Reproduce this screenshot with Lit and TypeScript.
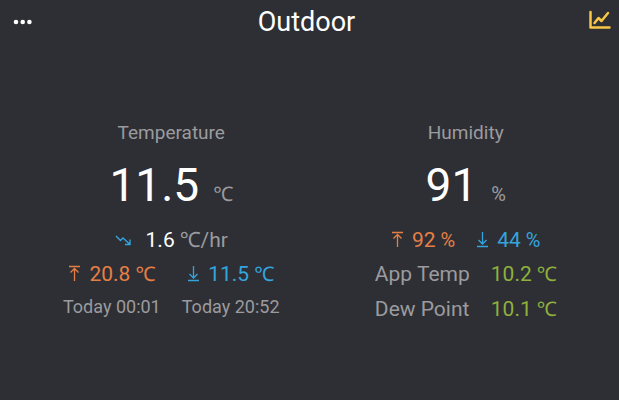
import { LitElement, html, css, svg } from "lit";
import { customElement } from "lit/decorators.js";

const highIcon = svg`<path d="M1 1.5H12M6.5 16V3.5M2.5 7.5L6.5 3.5L10.5 7.5"/>`;
const lowIcon = svg`<path d="M1 15.5H12M6.5 1V13M2.5 9L6.5 13L10.5 9"/>`;

@customElement("app-root")
export class AppRoot extends LitElement {
  static styles = css`
    :host {
      display: flex;
      flex-direction: column;
      min-height: 100vh;
      box-sizing: border-box;
      background: #2e2f34;
      color: #9b9b9f;
      font-family: Roboto, "Noto Sans", sans-serif;
      font-size: 21px;
      line-height: 34px;
      white-space: nowrap;
    }
    header {
      display: grid;
      grid-template-columns: 42px 1fr 48px;
      align-items: center;
      height: 43px;
    }
    h1 {
      margin: 0;
      text-align: center;
      font-size: 27px;
      font-weight: 400;
      color: #fff;
    }
    button {
      display: flex;
      align-items: center;
      height: 40px;
      padding: 0;
      border: 0;
      background: none;
      cursor: pointer;
    }
    .menu { padding-left: 13px; }
    .chart { justify-content: flex-end; padding: 0 8px 4px 0; }
    svg { display: block; fill: none; }
    main {
      flex: 1;
      display: grid;
      grid-template-columns: 1fr 1fr;
      align-content: center;
      padding: 2px 6px 0 24px;
    }
    section {
      display: flex;
      flex-direction: column;
      align-items: center;
    }
    h2 {
      margin: 0;
      font-size: 19px;
      font-weight: 400;
      line-height: 28px;
    }
    .value {
      display: flex;
      align-items: baseline;
      gap: 14px;
      line-height: 76px;
    }
    .number { font-size: 46px; color: #fff; }
    .unit { font-size: 20px; line-height: 20px; }
    .row { display: flex; align-items: center; }
    .trend { gap: 15px; }
    .strong { color: #fff; }
    .amount { display: flex; align-items: baseline; gap: 5px; }
    .pair { display: grid; grid-template-columns: auto auto; column-gap: 21px; justify-items: center; }
    .reading { display: flex; align-items: center; gap: 8px; }
    .high { color: #e57f46; }
    .low { color: #34a4de; }
    .derived { color: #8fb03c; }
    .time { font-size: 18px; line-height: 32px; }
    .facts {
      display: grid;
      grid-template-columns: auto auto;
      column-gap: 21px;
      margin: 0;
      line-height: 35px;
    }
    dd { margin: 0; }
  `;

  private amount(value: string, unit: string) {
    return html`<span class="amount"><span>${value}</span><span class="unit">${unit}</span></span>`;
  }

  private limit(kind: "high" | "low", value: string, unit: string) {
    return html`<span class="reading ${kind}">
      <svg width="13" height="17" viewBox="0 0 13 17" stroke="currentColor" stroke-width="1.3" aria-hidden="true">
        ${kind === "high" ? highIcon : lowIcon}
      </svg>
      ${this.amount(value, unit)}
    </span>`;
  }

  render() {
    return html`
      <header>
        <button class="menu" aria-label="More options">
          <svg width="20" height="6" viewBox="0 0 20 6">
            <g fill="#fff"><circle cx="3" cy="3" r="2.3"/><circle cx="9.7" cy="3" r="2.3"/><circle cx="16.4" cy="3" r="2.3"/></g>
          </svg>
        </button>
        <h1>Outdoor</h1>
        <button class="chart" aria-label="Show chart">
          <svg width="23" height="20" viewBox="0 0 23 20" stroke="#f6c644" stroke-width="2.5" stroke-linecap="round" stroke-linejoin="round">
            <path d="M2.5 2V17.5H21.5M6.5 13L10.5 8L13.5 11L20 3"/>
          </svg>
        </button>
      </header>
      <main>
        <section>
          <h2>Temperature</h2>
          <div class="value"><span class="number">11.5</span><span class="unit">℃</span></div>
          <div class="row trend">
            <svg class="low" width="16" height="12" viewBox="0 0 16 12" stroke="currentColor" stroke-width="1.4" aria-hidden="true">
              <path d="M1 2L5.5 6.5L8 4L14.5 10M15 5.5V10.5H10"/>
            </svg>
            <span class="amount"><span class="strong">1.6</span><span>℃/hr</span></span>
          </div>
          <div class="pair">
            ${this.limit("high", "20.8", "℃")} ${this.limit("low", "11.5", "℃")}
            <time class="time">Today 00:01</time>
            <time class="time">Today 20:52</time>
          </div>
        </section>
        <section>
          <h2>Humidity</h2>
          <div class="value"><span class="number">91</span><span class="unit">%</span></div>
          <div class="pair">
            ${this.limit("high", "92", "%")} ${this.limit("low", "44", "%")}
          </div>
          <dl class="facts">
            <dt>App Temp</dt><dd class="derived">${this.amount("10.2", "℃")}</dd>
            <dt>Dew Point</dt><dd class="derived">${this.amount("10.1", "℃")}</dd>
          </dl>
        </section>
      </main>
    `;
  }
}
